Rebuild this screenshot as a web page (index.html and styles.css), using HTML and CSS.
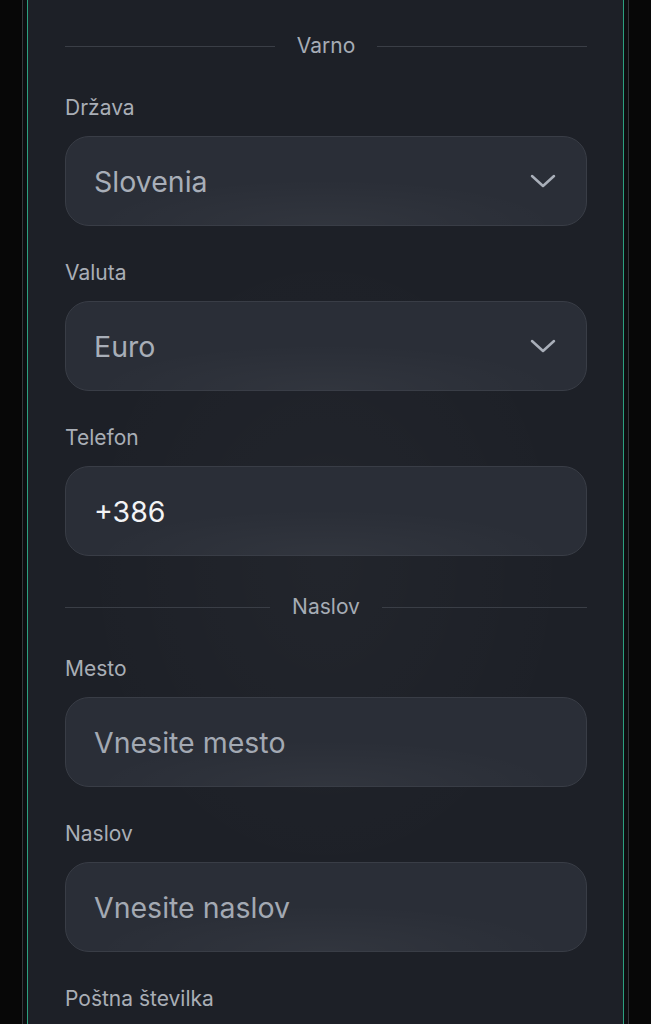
FILE: index.html
```html
<!DOCTYPE html>
<html lang="sl">
<head>
<meta charset="utf-8">
<title>Registracija</title>
<link rel="stylesheet" href="styles.css">
</head>
<body>
<div class="frame">
  <main class="panel">
    <section class="section">
      <div class="divider"><span class="line"></span><span class="divider-text">Varno</span><span class="line"></span></div>
      <div class="group">
        <label class="label">Država</label>
        <div class="field select">
          <span class="value">Slovenia</span>
          <svg class="chevron" width="26" height="14" viewBox="0 0 26 14"><path d="M2 2 L13 12 L24 2" fill="none" stroke="currentColor" stroke-width="2.5" stroke-linecap="round" stroke-linejoin="round"/></svg>
        </div>
      </div>
      <div class="group">
        <label class="label">Valuta</label>
        <div class="field select">
          <span class="value">Euro</span>
          <svg class="chevron" width="26" height="14" viewBox="0 0 26 14"><path d="M2 2 L13 12 L24 2" fill="none" stroke="currentColor" stroke-width="2.5" stroke-linecap="round" stroke-linejoin="round"/></svg>
        </div>
      </div>
      <div class="group last">
        <label class="label">Telefon</label>
        <div class="field"><input class="input" type="text" value="+386"></div>
      </div>
    </section>
    <section class="section">
      <div class="divider"><span class="line"></span><span class="divider-text">Naslov</span><span class="line"></span></div>
      <div class="group">
        <label class="label">Mesto</label>
        <div class="field"><input class="input" type="text" placeholder="Vnesite mesto"></div>
      </div>
      <div class="group">
        <label class="label">Naslov</label>
        <div class="field"><input class="input" type="text" placeholder="Vnesite naslov"></div>
      </div>
      <div class="group">
        <label class="label">Poštna številka</label>
        <div class="field"><input class="input" type="text" placeholder="Vnesite poštno številko"></div>
      </div>
    </section>
  </main>
</div>
</body>
</html>
```

FILE: styles.css
```css
html, body {
  margin: 0;
  padding: 0;
  height: 100%;
}
body {
  background: #070707;
  font-family: Inter, "Noto Sans", "Liberation Sans", sans-serif;
  overflow: hidden;
}
.frame {
  margin: 0 22px;
  height: 1024px;
  overflow: hidden;
  border-left: 1px solid #34373d;
  border-right: 1px solid #34373d;
  padding: 0 4px;
  background: #0d0e10;
}
.panel {
  height: 100%;
  overflow: hidden;
  box-sizing: border-box;
  border-left: 1px solid #2ba080;
  border-right: 1px solid #2ba080;
  background:
    radial-gradient(ellipse 60% 45% at 50% 55%, rgba(255,255,255,0.025), transparent 70%),
    #1d2027;
  padding: 34px 36px 0 37px;
}
.section {
  display: flex;
  flex-direction: column;
}
.divider {
  display: flex;
  align-items: center;
  gap: 22px;
  height: 24px;
  margin-bottom: 38px;
}
.line {
  flex: 1;
  height: 1px;
  background: #3a3e46;
}
.divider-text {
  font-size: 21px;
  line-height: 24px;
  color: #a6acb5;
}
.group {
  display: flex;
  flex-direction: column;
  gap: 16px;
  margin-bottom: 35px;
}
.group.last {
  margin-bottom: 39px;
}
.label {
  font-size: 21px;
  line-height: 24px;
  color: #a9aeb6;
}
.field {
  box-sizing: border-box;
  height: 90px;
  border-radius: 24px;
  border: 1px solid #393d46;
  background:
    radial-gradient(ellipse 60% 70% at 50% 100%, rgba(255,255,255,0.035), transparent 75%),
    #2a2e37;
  display: flex;
  align-items: center;
  padding: 0 30px 0 28px;
}
.select {
  justify-content: space-between;
}
.value {
  font-size: 28.5px;
  color: #a8aeb8;
}
.chevron {
  color: #a9afb9;
}
.input {
  flex: 1;
  min-width: 0;
  background: transparent;
  border: none;
  outline: none;
  padding: 0;
  font-family: inherit;
  font-size: 28.5px;
  color: #f2f3f5;
}
.input::placeholder {
  color: #a3a9b3;
  opacity: 1;
}
```
